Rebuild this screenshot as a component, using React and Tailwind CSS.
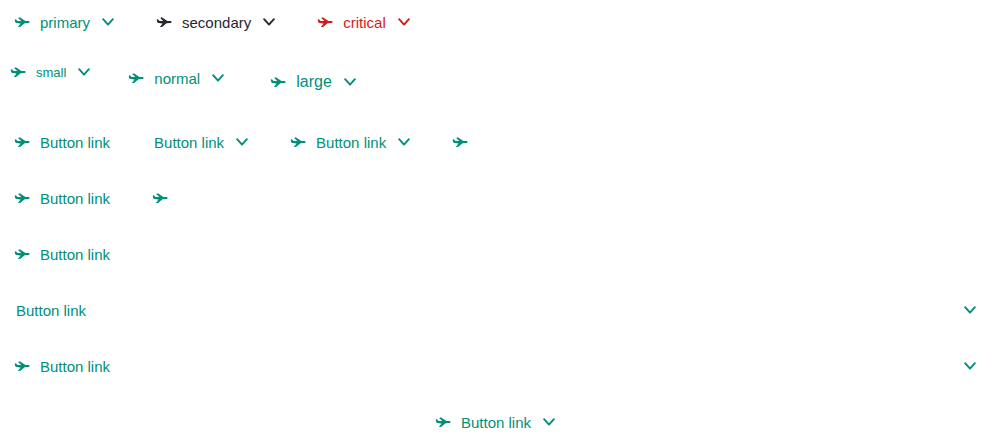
function Airplane() {
  return (
    <svg viewBox="0 0 20 20" className="size-5 shrink-0" fill="currentColor" aria-hidden="true">
      <path d="M2.7 7.4 L3.8 7.3 L5.6 8.9 L9.3 8.9 L6.2 6 L7.8 5.2 L13.4 9 L16.3 9 C17.1 9 17.5 9.4 17.5 10 C17.5 10.6 17.1 11 16.3 11 L12.6 11.2 L8 15 L5.9 15 L8.5 11.4 L4.8 11 C3.8 10.9 3.3 10.4 3.1 9.7 Z" />
    </svg>
  );
}

function ChevronDown() {
  return (
    <svg viewBox="0 0 20 20" className="size-5 shrink-0" fill="none" stroke="currentColor" strokeWidth="1.9" strokeLinecap="round" strokeLinejoin="round" aria-hidden="true">
      <path d="M5.1 7.2 L10 12.6 L14.9 7.2" />
    </svg>
  );
}

const tones = {
  primary: "text-[#008f79]",
  secondary: "text-[#252a31]",
  critical: "text-[#d21c1c]",
};

const sizes = {
  small: { box: "h-8 text-[13px] leading-[17px]", left: ["pl-3", "pl-2"], right: ["pr-3", "pr-2"] },
  normal: { box: "h-11 text-[15px] leading-[21px]", left: ["pl-4", "pl-3"], right: ["pr-4", "pr-3"] },
  large: { box: "h-[52px] text-base", left: ["pl-7", "pl-4"], right: ["pr-7", "pr-4"] },
};

function ButtonLink({ children, type = "primary", size = "normal", left, right, full, centered }) {
  const s = sizes[size];
  const iconOnly = !children;
  const width = full ? "w-full" : iconOnly ? "w-11" : "";
  const padding = iconOnly ? "justify-center" : `${s.left[left ? 1 : 0]} ${s.right[right ? 1 : 0]}`;
  return (
    <button
      type="button"
      className={`flex items-center gap-2 whitespace-nowrap ${tones[type]} ${s.box} ${width} ${padding} ${centered ? "justify-center" : ""}`}
    >
      {left && <Airplane />}
      {children && <span className={`text-left ${full && !centered ? "grow" : ""}`}>{children}</span>}
      {right && <ChevronDown />}
    </button>
  );
}

function Row({ children }) {
  return <div className="flex items-start gap-3">{children}</div>;
}

export default function App() {
  return (
    <main className="flex w-full flex-col gap-3 bg-white font-['Liberation_Sans',Arial,sans-serif]">
      <Row>
        <ButtonLink left right>primary</ButtonLink>
        <ButtonLink type="secondary" left right>secondary</ButtonLink>
        <ButtonLink type="critical" left right>critical</ButtonLink>
      </Row>
      <Row>
        <ButtonLink size="small" left right>small</ButtonLink>
        <ButtonLink left right>normal</ButtonLink>
        <ButtonLink size="large" left right>large</ButtonLink>
      </Row>
      <Row>
        <ButtonLink left>Button link</ButtonLink>
        <ButtonLink right>Button link</ButtonLink>
        <ButtonLink left right>Button link</ButtonLink>
        <ButtonLink left />
      </Row>
      <Row>
        <ButtonLink left>Button link</ButtonLink>
        <ButtonLink left />
      </Row>
      <ButtonLink full left>Button link</ButtonLink>
      <ButtonLink full right>Button link</ButtonLink>
      <ButtonLink full left right>Button link</ButtonLink>
      <ButtonLink full centered left right>Button link</ButtonLink>
    </main>
  );
}
